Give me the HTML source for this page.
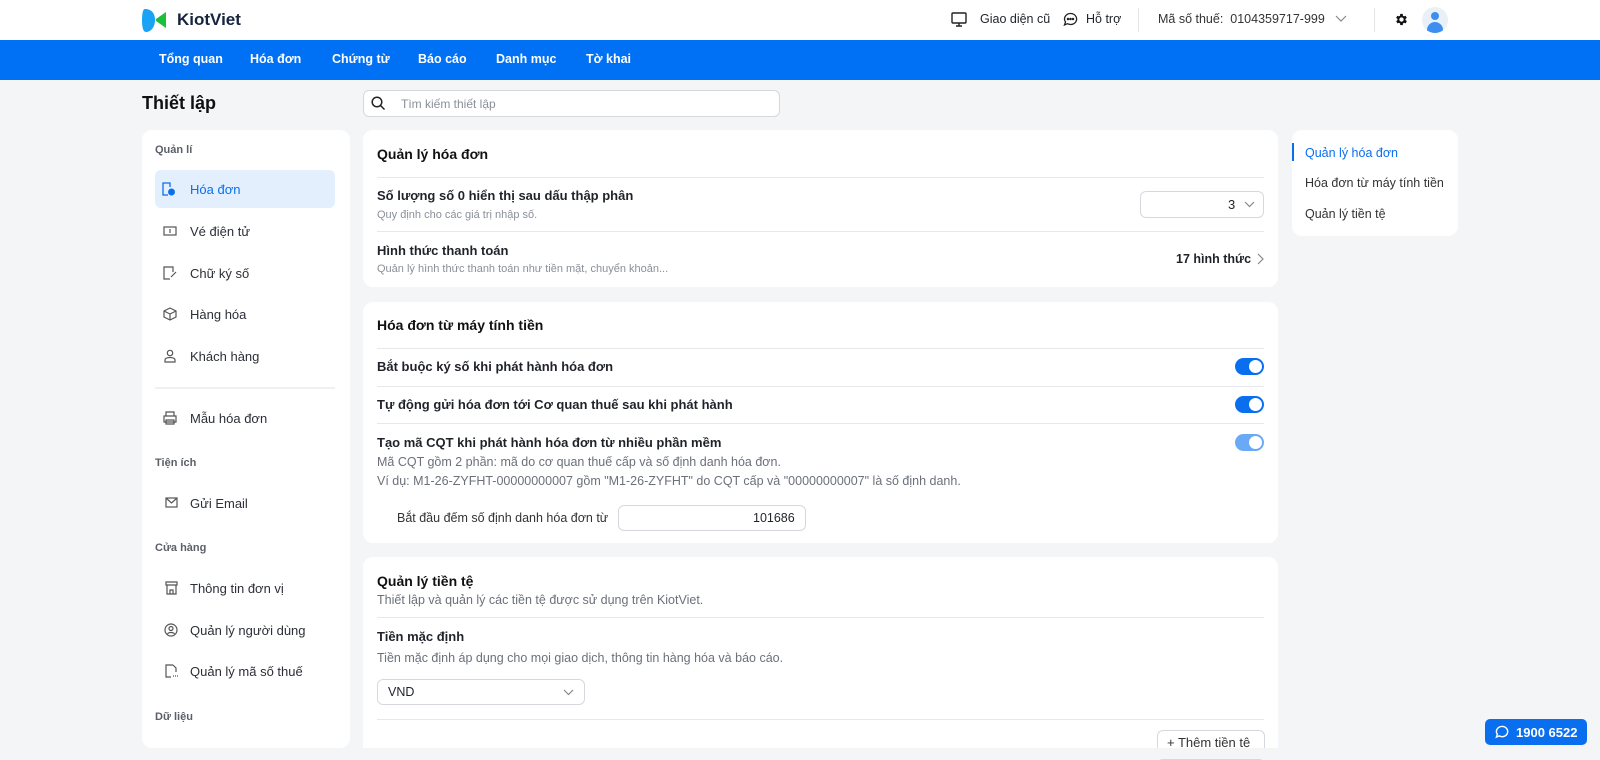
<!DOCTYPE html>
<html><head><meta charset="utf-8"><style>
*{box-sizing:border-box;margin:0;padding:0}
body{width:1600px;height:759px;overflow:hidden;background:#f4f5f7;font-family:"Liberation Sans",sans-serif;color:#1f2329;position:relative;font-size:13px}
.a{position:absolute;white-space:nowrap}
.hdr{left:0;top:0;width:1600px;height:40px;background:#fff}
.nav{left:0;top:40px;width:1600px;height:40px;background:#0070f4}
.nav span{position:absolute;top:12px;color:#fff;font-weight:bold;font-size:12.5px}
.card{background:#fff;border-radius:10px;position:absolute}
.t{font-size:13px;font-weight:bold;color:#1f2329}
.s{font-size:11px;color:#8a8f99}
.d{font-size:12.5px;color:#6b7079}
.hr{position:absolute;height:1px;background:#e6e8eb}
.lbl{font-size:11px;color:#5b6068;font-weight:bold}
.it{font-size:13px;color:#2b2f36}
.tg{position:absolute;width:29px;height:17px;border-radius:9px;background:#0a6fef}
.tg:after{content:"";position:absolute;right:2px;top:2px;width:13px;height:13px;border-radius:50%;background:#fff}
.box{position:absolute;border:1px solid #d5d8dd;border-radius:6px;background:#fff}
</style></head><body>
<div class="a hdr"></div>
<svg class="a" style="left:142px;top:7px" width="26" height="26" viewBox="0 0 26 26"><path d="M3 2 C10 2 13 7 13 13 C13 20 9 25 4 25 C1 25 0 20 0 13 C0 6 1 2 3 2Z" fill="#1aa2f5"/><path d="M24 5 L24 21 L14 14 L14 12Z" fill="#1bbf3a"/></svg>
<div class="a" style="left:177px;top:10px;font-size:17px;font-weight:bold;color:#16243d">KiotViet</div>
<svg class="a" style="left:951px;top:12px" width="16" height="15" viewBox="0 0 16 15" fill="none" stroke="#222" stroke-width="1.4"><rect x="1" y="1" width="14" height="10" rx="1"/><path d="M5 14h6M8 11v3"/></svg>
<div class="a" style="left:980px;top:12px;font-size:12.5px">Giao diện cũ</div>
<svg class="a" style="left:1063px;top:12px" width="15" height="15" viewBox="0 0 15 15" fill="none" stroke="#222" stroke-width="1.3"><path d="M7.5 1.5a6 5.5 0 1 1-3 10.2L1.5 13l1-3A6 5.5 0 0 1 7.5 1.5z"/><circle cx="5" cy="7" r=".6" fill="#222"/><circle cx="7.5" cy="7" r=".6" fill="#222"/><circle cx="10" cy="7" r=".6" fill="#222"/></svg>
<div class="a" style="left:1086px;top:12px;font-size:12.5px">Hỗ trợ</div>
<div class="a" style="left:1138px;top:8px;width:1px;height:24px;background:#e3e5e8"></div>
<div class="a" style="left:1158px;top:12px;font-size:12.5px;color:#333">Mã số thuế:&nbsp; 0104359717-999</div>
<svg class="a" style="left:1335px;top:15px" width="12" height="8" viewBox="0 0 12 8" fill="none" stroke="#888" stroke-width="1.2"><path d="M1 1l5 5 5-5"/></svg>
<div class="a" style="left:1374px;top:8px;width:1px;height:24px;background:#e3e5e8"></div>
<svg class="a" style="left:1394px;top:12px" width="15" height="15" viewBox="0 0 24 24"><path fill="#111" d="M19.4 13a7.5 7.5 0 0 0 0-2l2.1-1.6-2-3.5-2.5 1a7 7 0 0 0-1.7-1L15 3h-4l-.4 2.9a7 7 0 0 0-1.7 1l-2.5-1-2 3.5L6.6 11a7.5 7.5 0 0 0 0 2l-2.1 1.6 2 3.5 2.5-1a7 7 0 0 0 1.7 1L11 21h4l.4-2.9a7 7 0 0 0 1.7-1l2.5 1 2-3.5zM13 15.5a3.5 3.5 0 1 1 0-7 3.5 3.5 0 0 1 0 7z" transform="translate(-1 0)"/></svg>
<div class="a" style="left:1422px;top:7px;width:26px;height:26px;border-radius:50%;background:#eaf0f8;overflow:hidden"><div class="a" style="left:9px;top:5px;width:8px;height:8px;border-radius:50%;background:#3c8ef0"></div><div class="a" style="left:5px;top:15px;width:16px;height:12px;border-radius:8px 8px 0 0;background:#3c8ef0"></div></div>

<div class="a nav"><span style="left:159px">Tổng quan</span><span style="left:250px">Hóa đơn</span><span style="left:332px">Chứng từ</span><span style="left:418px">Báo cáo</span><span style="left:496px">Danh mục</span><span style="left:586px">Tờ khai</span></div>

<div class="a" style="left:142px;top:93px;font-size:18px;font-weight:bold;color:#111">Thiết lập</div>
<div class="box" style="left:363px;top:90px;width:417px;height:27px;border-radius:6px"></div>
<svg class="a" style="left:371px;top:96px" width="15" height="15" viewBox="0 0 15 15" fill="none" stroke="#222" stroke-width="1.5"><circle cx="6" cy="6" r="4.8"/><path d="M9.5 9.5l4 4"/></svg>
<div class="a" style="left:401px;top:97px;font-size:12px;color:#8a8f99">Tìm kiếm thiết lập</div>

<div class="card" style="left:142px;top:130px;width:208px;height:618px"></div>
<div class="a lbl" style="left:155px;top:144px">Quản lí</div>
<div class="a" style="left:155px;top:170px;width:180px;height:38px;background:#e3effd;border-radius:6px"></div>
<svg class="a" style="left:161px;top:182px" width="14" height="14" viewBox="0 0 14 14" fill="none" stroke="#0a6fef" stroke-width="1.3"><path d="M9 5V1H2v12h5"/><circle cx="10.5" cy="10" r="2.8" fill="#0a6fef"/></svg>
<div class="a it" style="left:190px;top:182px;color:#0a6fef">Hóa đơn</div>
<svg class="a" style="left:163px;top:226px" width="14" height="10" viewBox="0 0 14 10" fill="none" stroke="#555" stroke-width="1.2"><rect x="1" y="1" width="12" height="8"/><path d="M7 3v4"/></svg>
<div class="a it" style="left:190px;top:224px">Vé điện tử</div>
<svg class="a" style="left:163px;top:266px" width="14" height="14" viewBox="0 0 14 14" fill="none" stroke="#555" stroke-width="1.2"><path d="M10 6V1H1v12h6M8 11l5-5"/></svg>
<div class="a it" style="left:190px;top:266px">Chữ ký số</div>
<svg class="a" style="left:163px;top:307px" width="14" height="14" viewBox="0 0 14 14" fill="none" stroke="#555" stroke-width="1.2"><path d="M7 1l6 3v6l-6 3-6-3V4zM1 4l6 3 6-3M7 7v6"/></svg>
<div class="a it" style="left:190px;top:307px">Hàng hóa</div>
<svg class="a" style="left:163px;top:349px" width="14" height="14" viewBox="0 0 14 14" fill="none" stroke="#555" stroke-width="1.2"><circle cx="7" cy="4" r="2.7"/><path d="M2 13v-2c0-1.5 2-2.5 5-2.5s5 1 5 2.5v2z"/></svg>
<div class="a it" style="left:190px;top:349px">Khách hàng</div>
<div class="hr" style="left:155px;top:387px;width:180px;height:2px;background:#eef0f2"></div>
<svg class="a" style="left:163px;top:411px" width="14" height="14" viewBox="0 0 14 14" fill="none" stroke="#555" stroke-width="1.2"><path d="M3 5V1h8v4M1 5h12v6H1zM3 9h8v4H3z"/></svg>
<div class="a it" style="left:190px;top:411px">Mẫu hóa đơn</div>
<div class="a lbl" style="left:155px;top:457px">Tiện ích</div>
<svg class="a" style="left:165px;top:497px" width="13" height="11" viewBox="0 0 13 11" fill="none" stroke="#555" stroke-width="1.2"><rect x="1" y="1" width="11" height="9"/><path d="M1 1l5.5 5L12 1"/></svg>
<div class="a it" style="left:190px;top:496px">Gửi Email</div>
<div class="a lbl" style="left:155px;top:542px">Cửa hàng</div>
<svg class="a" style="left:165px;top:581px" width="13" height="14" viewBox="0 0 13 14" fill="none" stroke="#555" stroke-width="1.2"><path d="M1 1h11v3H1zM2 4v9h9V4M5 13V9h3v4"/></svg>
<div class="a it" style="left:190px;top:581px">Thông tin đơn vị</div>
<svg class="a" style="left:164px;top:623px" width="14" height="14" viewBox="0 0 14 14" fill="none" stroke="#555" stroke-width="1.2"><circle cx="7" cy="7" r="6"/><circle cx="7" cy="5.5" r="2"/><path d="M3.5 11c1-2 6-2 7 0"/></svg>
<div class="a it" style="left:190px;top:623px">Quản lý người dùng</div>
<svg class="a" style="left:165px;top:664px" width="13" height="14" viewBox="0 0 13 14" fill="none" stroke="#555" stroke-width="1.2"><path d="M8 1H1v12h5M8 1l3 3v4"/><path d="M8 12h1M10 12h1M12 12h1"/></svg>
<div class="a it" style="left:190px;top:664px">Quản lý mã số thuế</div>
<div class="a lbl" style="left:155px;top:711px">Dữ liệu</div>

<div class="card" style="left:363px;top:130px;width:915px;height:157px"></div>
<div class="a" style="left:377px;top:146px;font-size:14px;font-weight:bold;color:#111">Quản lý hóa đơn</div>
<div class="hr" style="left:377px;top:177px;width:887px"></div>
<div class="a t" style="left:377px;top:188px">Số lượng số 0 hiển thị sau dấu thập phân</div>
<div class="a s" style="left:377px;top:209px">Quy định cho các giá trị nhập số.</div>
<div class="box" style="left:1140px;top:191px;width:124px;height:27px"></div>
<div class="a" style="left:1228px;top:197px;font-size:13px">3</div>
<svg class="a" style="left:1244px;top:201px" width="11" height="7" viewBox="0 0 11 7" fill="none" stroke="#888" stroke-width="1.2"><path d="M1 1l4.5 4.5L10 1"/></svg>
<div class="hr" style="left:377px;top:231px;width:887px"></div>
<div class="a t" style="left:377px;top:243px">Hình thức thanh toán</div>
<div class="a s" style="left:377px;top:263px">Quản lý hình thức thanh toán như tiền mặt, chuyển khoản...</div>
<div class="a" style="left:1176px;top:252px;font-size:12.5px;font-weight:bold">17 hình thức</div>
<svg class="a" style="left:1257px;top:253px" width="7" height="12" viewBox="0 0 7 12" fill="none" stroke="#888" stroke-width="1.2"><path d="M1 1l5 5-5 5"/></svg>

<div class="card" style="left:363px;top:302px;width:915px;height:241px"></div>
<div class="a" style="left:377px;top:317px;font-size:14px;font-weight:bold;color:#111">Hóa đơn từ máy tính tiền</div>
<div class="hr" style="left:377px;top:348px;width:887px"></div>
<div class="a t" style="left:377px;top:359px">Bắt buộc ký số khi phát hành hóa đơn</div>
<div class="tg" style="left:1235px;top:358px"></div>
<div class="hr" style="left:377px;top:386px;width:887px"></div>
<div class="a t" style="left:377px;top:397px">Tự động gửi hóa đơn tới Cơ quan thuế sau khi phát hành</div>
<div class="tg" style="left:1235px;top:396px"></div>
<div class="hr" style="left:377px;top:423px;width:887px"></div>
<div class="a t" style="left:377px;top:435px">Tạo mã CQT khi phát hành hóa đơn từ nhiều phần mềm</div>
<div class="tg" style="left:1235px;top:434px;background:#6aa9f6"></div>
<div class="a d" style="left:377px;top:455px">Mã CQT gồm 2 phần: mã do cơ quan thuế cấp và số định danh hóa đơn.</div>
<div class="a d" style="left:377px;top:474px">Ví dụ: M1-26-ZYFHT-00000000007 gồm "M1-26-ZYFHT" do CQT cấp và "00000000007" là số định danh.</div>
<div class="a" style="left:397px;top:511px;font-size:12.5px;color:#333">Bắt đầu đếm số định danh hóa đơn từ</div>
<div class="box" style="left:618px;top:505px;width:188px;height:26px"></div>
<div class="a" style="left:753px;top:511px;font-size:12.5px">101686</div>

<div class="a" style="left:363px;top:557px;width:915px;height:191px;background:#fff;border-radius:10px 10px 0 0"></div>
<div class="a" style="left:377px;top:573px;font-size:14px;font-weight:bold;color:#111">Quản lý tiền tệ</div>
<div class="a d" style="left:377px;top:593px">Thiết lập và quản lý các tiền tệ được sử dụng trên KiotViet.</div>
<div class="hr" style="left:377px;top:617px;width:887px"></div>
<div class="a t" style="left:377px;top:629px">Tiền mặc định</div>
<div class="a d" style="left:377px;top:651px">Tiền mặc định áp dụng cho mọi giao dịch, thông tin hàng hóa và báo cáo.</div>
<div class="box" style="left:377px;top:679px;width:208px;height:26px"></div>
<div class="a" style="left:388px;top:685px;font-size:12.5px">VND</div>
<svg class="a" style="left:563px;top:689px" width="11" height="7" viewBox="0 0 11 7" fill="none" stroke="#888" stroke-width="1.2"><path d="M1 1l4.5 4.5L10 1"/></svg>
<div class="hr" style="left:377px;top:719px;width:887px"></div>
<div class="box" style="left:1157px;top:730px;width:108px;height:30px"></div>
<div class="a" style="left:1167px;top:735px;font-size:13px;color:#333">+ Thêm tiền tệ</div>
<div class="a" style="left:0;top:748px;width:1600px;height:11px;background:#f4f5f7"></div>

<div class="card" style="left:1292px;top:130px;width:166px;height:106px"></div>
<div class="a" style="left:1292px;top:143px;width:2px;height:18px;background:#0a6fef"></div>
<div class="a" style="left:1305px;top:146px;font-size:12.5px;color:#0a6fef">Quản lý hóa đơn</div>
<div class="a" style="left:1305px;top:176px;font-size:12.5px;color:#333">Hóa đơn từ máy tính tiền</div>
<div class="a" style="left:1305px;top:207px;font-size:12.5px;color:#333">Quản lý tiền tệ</div>

<div class="a" style="left:1485px;top:719px;width:102px;height:26px;background:#0a6fef;border-radius:5px"></div>
<svg class="a" style="left:1495px;top:725px" width="14" height="14" viewBox="0 0 15 15" fill="none" stroke="#fff" stroke-width="1.5"><path d="M7.5 1.5a6 5.5 0 1 1-3 10.2L1.5 13l1-3A6 5.5 0 0 1 7.5 1.5z"/></svg>
<div class="a" style="left:1516px;top:725px;font-size:13px;font-weight:bold;color:#fff">1900 6522</div>
</body></html>
